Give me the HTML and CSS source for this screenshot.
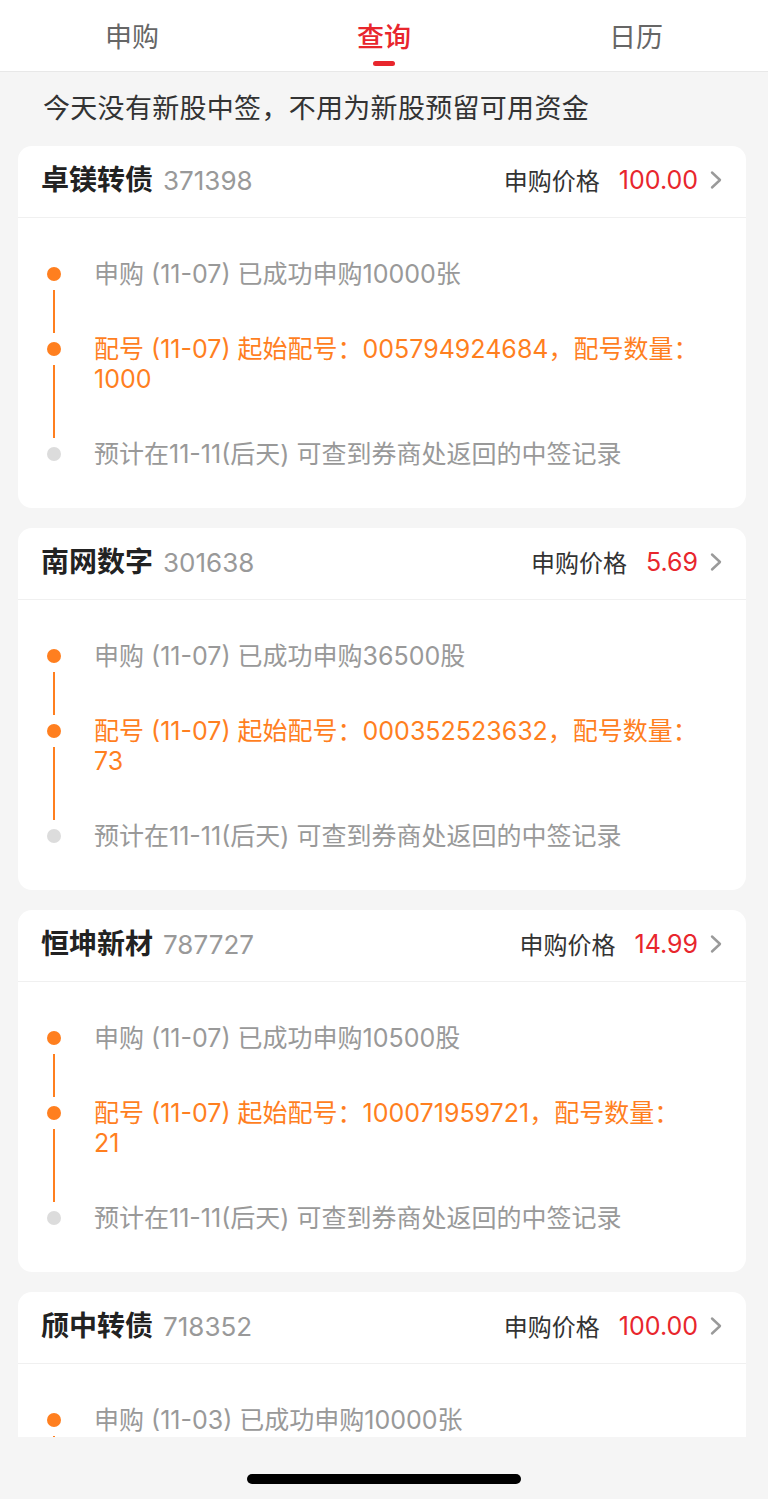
FILE: index.html
```html
<!DOCTYPE html>
<html lang="zh-CN">

<head>
  <meta charset="UTF-8">
  <meta name="viewport" content="width=device-width, initial-scale=1.0">
  <title>新股查询</title>
  <link rel="stylesheet" href="styles.css">
</head>

<body>
  <nav class="tabs">
    <div class="tab">申购</div>
    <div class="tab active">查询<span class="indicator"></span></div>
    <div class="tab">日历</div>
  </nav>

  <main class="list">
    <p class="notice">今天没有新股中签，不用为新股预留可用资金</p>

    <section class="card">
      <div class="card-head">
        <div class="name">卓镁转债<span class="code">371398</span></div>
        <div class="price-box">
          <span class="price-label">申购价格</span>
          <span class="price">100.00</span>
          <svg class="chevron" width="12" height="20" viewBox="0 0 12 20"><path d="M2 2.5 L10 10 L2 17.5" fill="none" stroke="#9a9a9a" stroke-width="2.4" stroke-linecap="round" stroke-linejoin="round"/></svg>
        </div>
      </div>
      <div class="steps">
        <div class="step">
          <div class="rail"><span class="dot"></span><span class="line"></span></div>
          <div class="text">申购 (11-07) 已成功申购10000张</div>
        </div>
        <div class="step">
          <div class="rail"><span class="dot"></span><span class="line"></span></div>
          <div class="text hot">配号 (11-07) 起始配号：005794924684，配号数量：1000</div>
        </div>
        <div class="step">
          <div class="rail"><span class="dot pending"></span></div>
          <div class="text">预计在11-11(后天) 可查到券商处返回的中签记录</div>
        </div>
      </div>
    </section>

    <section class="card">
      <div class="card-head">
        <div class="name">南网数字<span class="code">301638</span></div>
        <div class="price-box">
          <span class="price-label">申购价格</span>
          <span class="price">5.69</span>
          <svg class="chevron" width="12" height="20" viewBox="0 0 12 20"><path d="M2 2.5 L10 10 L2 17.5" fill="none" stroke="#9a9a9a" stroke-width="2.4" stroke-linecap="round" stroke-linejoin="round"/></svg>
        </div>
      </div>
      <div class="steps">
        <div class="step">
          <div class="rail"><span class="dot"></span><span class="line"></span></div>
          <div class="text">申购 (11-07) 已成功申购36500股</div>
        </div>
        <div class="step">
          <div class="rail"><span class="dot"></span><span class="line"></span></div>
          <div class="text hot">配号 (11-07) 起始配号：000352523632，配号数量：73</div>
        </div>
        <div class="step">
          <div class="rail"><span class="dot pending"></span></div>
          <div class="text">预计在11-11(后天) 可查到券商处返回的中签记录</div>
        </div>
      </div>
    </section>

    <section class="card">
      <div class="card-head">
        <div class="name">恒坤新材<span class="code">787727</span></div>
        <div class="price-box">
          <span class="price-label">申购价格</span>
          <span class="price">14.99</span>
          <svg class="chevron" width="12" height="20" viewBox="0 0 12 20"><path d="M2 2.5 L10 10 L2 17.5" fill="none" stroke="#9a9a9a" stroke-width="2.4" stroke-linecap="round" stroke-linejoin="round"/></svg>
        </div>
      </div>
      <div class="steps">
        <div class="step">
          <div class="rail"><span class="dot"></span><span class="line"></span></div>
          <div class="text">申购 (11-07) 已成功申购10500股</div>
        </div>
        <div class="step">
          <div class="rail"><span class="dot"></span><span class="line"></span></div>
          <div class="text hot">配号 (11-07) 起始配号：100071959721，配号数量：21</div>
        </div>
        <div class="step">
          <div class="rail"><span class="dot pending"></span></div>
          <div class="text">预计在11-11(后天) 可查到券商处返回的中签记录</div>
        </div>
      </div>
    </section>

    <section class="card">
      <div class="card-head">
        <div class="name">颀中转债<span class="code">718352</span></div>
        <div class="price-box">
          <span class="price-label">申购价格</span>
          <span class="price">100.00</span>
          <svg class="chevron" width="12" height="20" viewBox="0 0 12 20"><path d="M2 2.5 L10 10 L2 17.5" fill="none" stroke="#9a9a9a" stroke-width="2.4" stroke-linecap="round" stroke-linejoin="round"/></svg>
        </div>
      </div>
      <div class="steps">
        <div class="step">
          <div class="rail"><span class="dot"></span><span class="line"></span></div>
          <div class="text gap">申购 (11-03) 已成功申购10000张</div>
        </div>
      </div>
    </section>
  </main>

  <footer class="home-bar"><span class="home-indicator"></span></footer>
</body>

</html>
```

FILE: styles.css
```css
html, body {
  height: 100%;
}

body {
  margin: 0;
  display: flex;
  flex-direction: column;
  background-color: #f5f5f5;
  font-family: "Inter", "Noto Sans CJK SC", sans-serif;
  color: #333;
}

.tabs {
  display: grid;
  grid-template-columns: repeat(3, 1fr);
  height: 71px;
  padding: 0 6px;
  background-color: #fff;
  border-bottom: 1px solid #e8e8e8;
  flex-shrink: 0;
}

.tab {
  display: flex;
  flex-direction: column;
  align-items: center;
  padding-top: 20px;
  font-size: 27px;
  line-height: 36px;
  color: #666;
}

.tab.active {
  color: #e8262d;
  font-weight: 500;
}

.indicator {
  width: 22px;
  height: 5px;
  margin-top: 5px;
  border-radius: 3px;
  background-color: #e8262d;
}

.list {
  flex: 1;
  overflow: hidden;
  padding: 0 22px 0 18px;
}

.notice {
  margin: 0;
  padding: 19px 0 19px 25px;
  font-size: 27px;
  line-height: 36px;
  letter-spacing: 0.3px;
  color: #333;
}

.card {
  background-color: #fff;
  border-radius: 14px;
  margin-bottom: 20px;
}

.card-head {
  display: flex;
  align-items: center;
  justify-content: space-between;
  height: 71px;
  padding: 0 24px 0 23px;
  border-bottom: 1px solid #f0f0f0;
}

.name {
  font-size: 28px;
  line-height: 34px;
  font-weight: bold;
  color: #222;
  margin-top: -2px;
}

.code {
  margin-left: 10px;
  font-size: 26px;
  font-weight: normal;
  color: #999;
}

.price-box {
  display: flex;
  align-items: center;
  margin-top: -4px;
}

.price-label {
  font-size: 24px;
  color: #333;
}

.price {
  margin-left: 19px;
  font-size: 25px;
  color: #e8262d;
}

.chevron {
  margin-left: 12px;
}

.steps {
  padding: 41px 43px 39px 29px;
}

.step {
  display: flex;
  gap: 33px;
}

.rail {
  display: flex;
  flex-direction: column;
  align-items: center;
  width: 14px;
  flex-shrink: 0;
}

.dot {
  width: 14px;
  height: 14px;
  margin-top: 8px;
  border-radius: 50%;
  background-color: #ff7f1f;
}

.dot.pending {
  background-color: #dcdcdc;
}

.line {
  flex: 1;
  width: 2px;
  margin: 9px 0 1px;
  background-color: #ff7f1f;
}

.text {
  font-size: 25px;
  line-height: 30px;
  color: #999;
}

.step:not(:last-child) .text,
.text.gap {
  padding-bottom: 45px;
}

.text.hot {
  color: #ff7f1f;
}

.home-bar {
  height: 62px;
  flex-shrink: 0;
  display: flex;
  justify-content: center;
  padding-top: 37px;
  box-sizing: border-box;
}

.home-indicator {
  width: 274px;
  height: 10px;
  border-radius: 5px;
  background-color: #000;
}
```
